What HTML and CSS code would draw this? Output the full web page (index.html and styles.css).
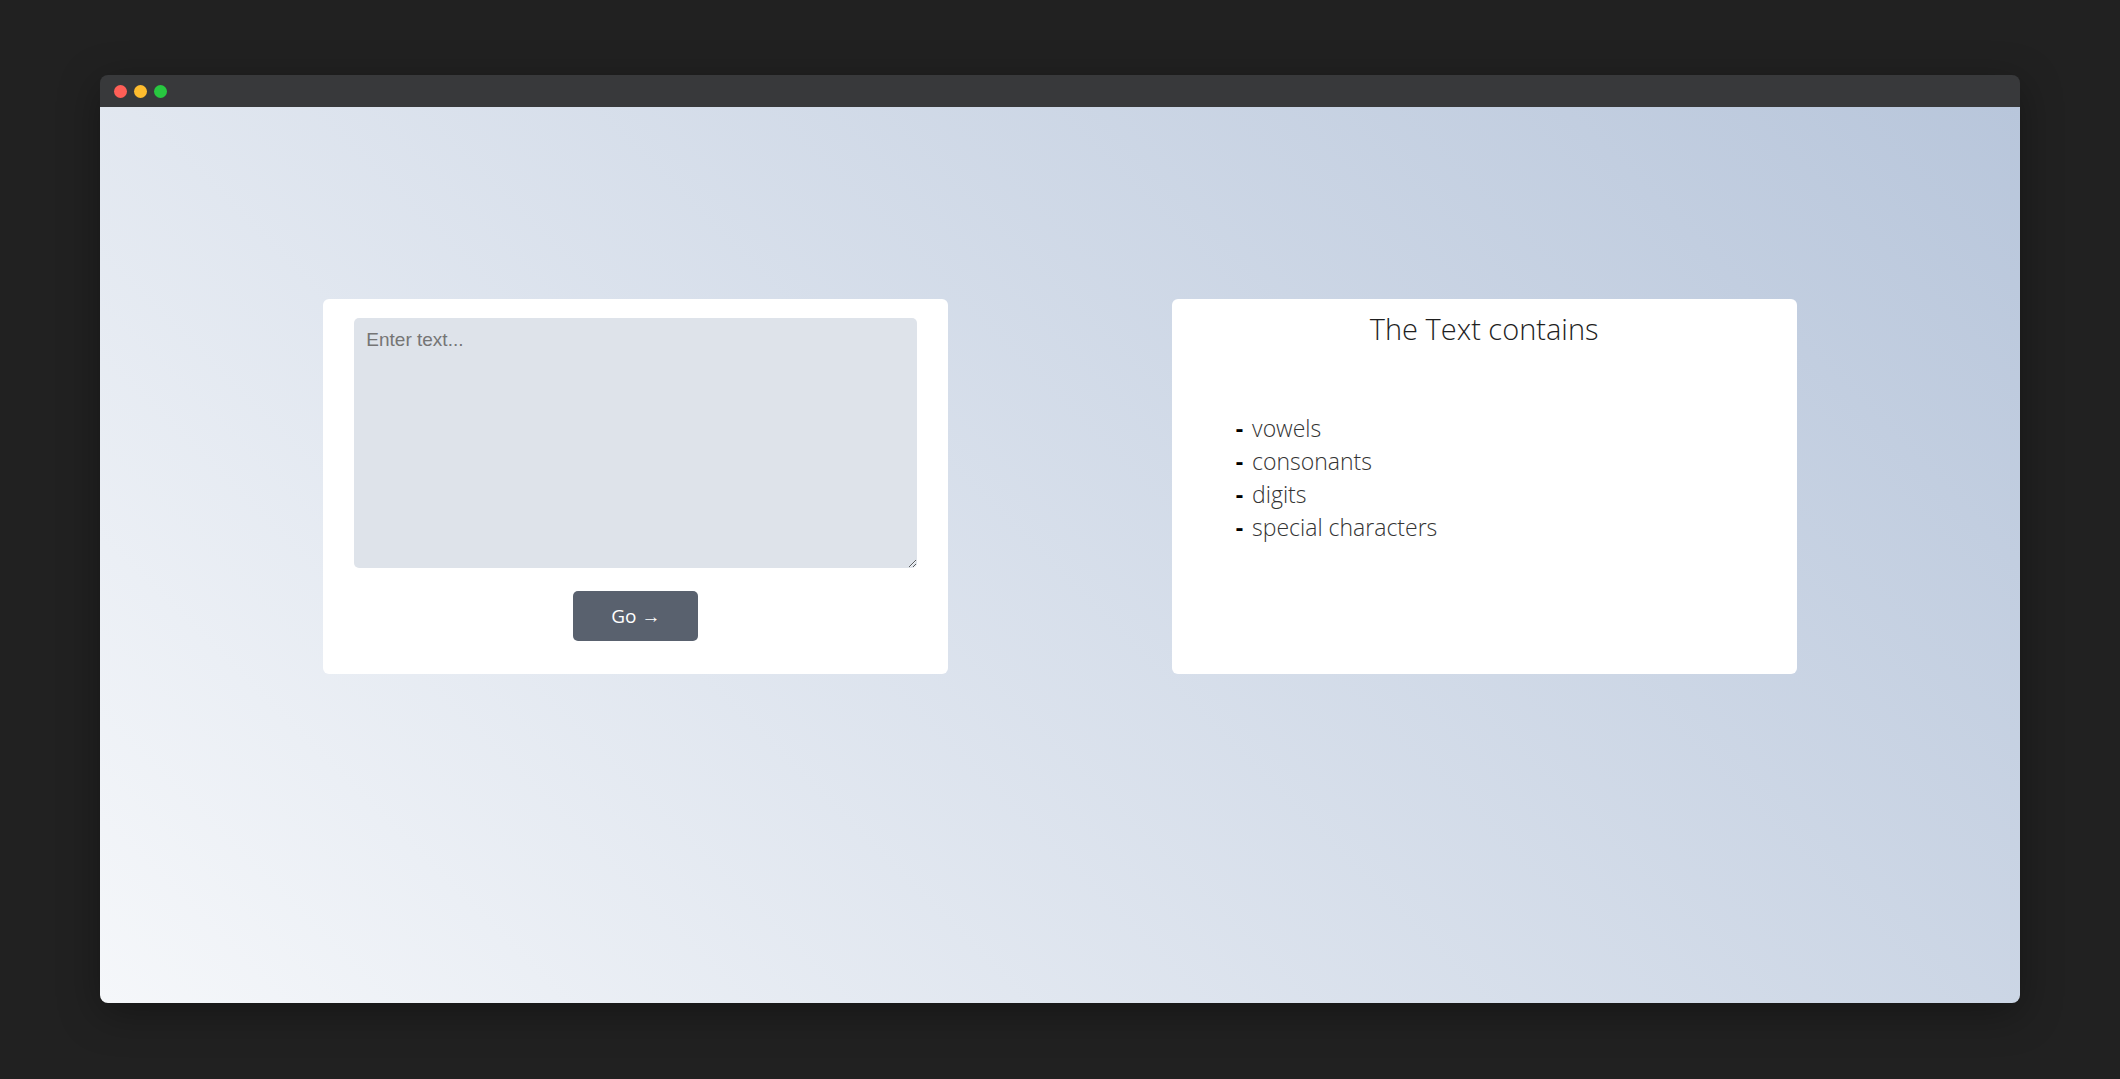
FILE: index.html
```html
<!DOCTYPE html>
<html lang="en">
<head>
<meta charset="utf-8">
<title>Text analyzer</title>
<link rel="stylesheet" href="styles.css">
</head>
<body>
<div class="window">
  <div class="titlebar">
    <span class="dot dot-red"></span>
    <span class="dot dot-yellow"></span>
    <span class="dot dot-green"></span>
  </div>
  <main class="content">
    <section class="card input-card">
      <textarea class="text-input" placeholder="Enter text..."></textarea>
      <button class="go-btn" type="button">Go →</button>
    </section>
    <section class="card result-card">
      <h2 class="result-title">The Text contains</h2>
      <ul class="result-list">
        <li><span class="dash">-</span>vowels</li>
        <li><span class="dash">-</span>consonants</li>
        <li><span class="dash">-</span>digits</li>
        <li><span class="dash">-</span>special characters</li>
      </ul>
    </section>
  </main>
</div>
</body>
</html>
```

FILE: styles.css
```css
html, body {
  margin: 0;
  padding: 0;
}

body {
  background: #212121;
  padding: 75px 100px 0;
  height: 1079px;
  box-sizing: border-box;
  font-family: "Open Sans", "Liberation Sans", sans-serif;
}

.window {
  width: 1920px;
  border-radius: 8px;
  overflow: hidden;
  box-shadow: 0 10px 40px rgba(0, 0, 0, 0.35);
}

.titlebar {
  height: 32px;
  background: #38393b;
  display: flex;
  align-items: center;
  gap: 7px;
  padding-left: 14px;
}

.dot {
  width: 13px;
  height: 13px;
  border-radius: 50%;
}

.dot-red { background: #ff5f57; }
.dot-yellow { background: #febc2e; }
.dot-green { background: #28c840; }

.content {
  height: 896px;
  box-sizing: border-box;
  padding-top: 192px;
  background-image: linear-gradient(45deg, #f5f7fa 0%, #b8c6db 100%);
  display: flex;
  justify-content: space-evenly;
  align-items: flex-start;
}

.card {
  width: 625px;
  height: 375px;
  box-sizing: border-box;
  background: #ffffff;
  border-radius: 6px;
}

.input-card {
  padding: 19px 31px 0;
  display: flex;
  flex-direction: column;
  align-items: center;
}

.text-input {
  width: 563px;
  height: 250px;
  box-sizing: border-box;
  background: #dee3ea;
  border: none;
  border-radius: 5px;
  padding: 11px 12px;
  font-family: "Liberation Sans", Arial, sans-serif;
  font-size: 19px;
  color: #333;
  resize: vertical;
  outline: none;
}

.text-input::placeholder {
  color: #757575;
}

.go-btn {
  margin-top: 23px;
  width: 125px;
  height: 50px;
  background: #59616e;
  color: #ffffff;
  border: none;
  border-radius: 5px;
  font-family: "Open Sans", sans-serif;
  font-size: 19px;
  font-weight: 400;
  cursor: pointer;
}

.result-card {
  padding: 0 64px;
}

.result-title {
  margin: 0;
  padding-top: 8px;
  text-align: center;
  font-size: 29px;
  font-weight: 300;
  line-height: 44px;
  color: #1f1f1f;
}

.result-list {
  list-style: none;
  margin: 61px 0 0;
  padding: 0;
  font-size: 23px;
  font-weight: 300;
  line-height: 33px;
  color: #333;
}

.dash {
  color: #000;
  font-weight: 700;
  margin-right: 9px;
}
```
